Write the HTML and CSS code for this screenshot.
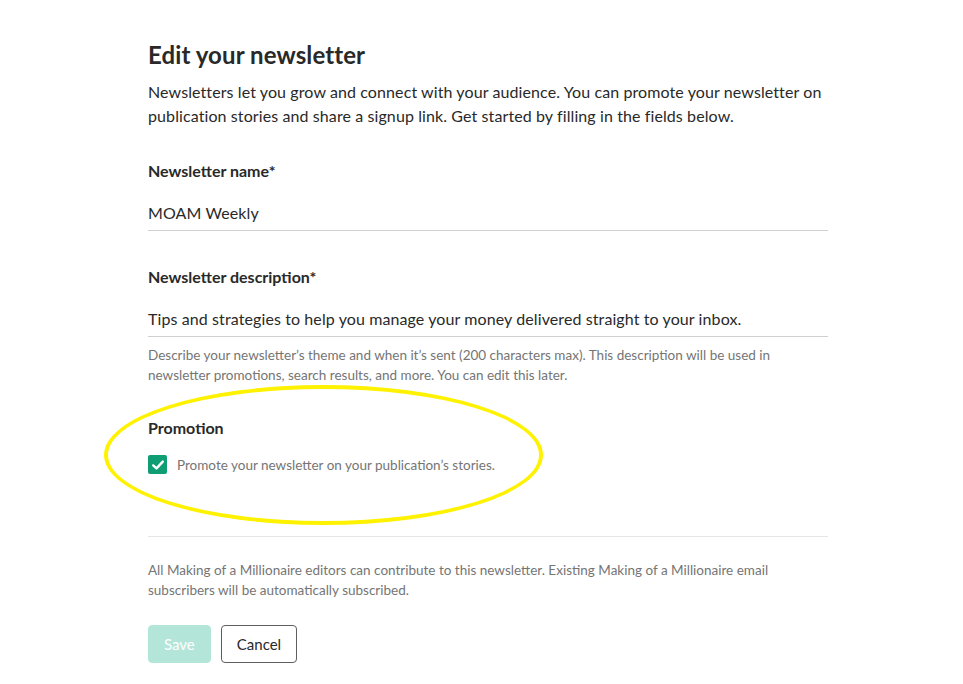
FILE: index.html
```html
<!DOCTYPE html>
<html lang="en">
<head>
  <meta charset="UTF-8">
  <title>Edit your newsletter</title>
  <link rel="stylesheet" href="styles.css">
</head>
<body>

<div class="page">
  <h1 class="title">Edit your newsletter</h1>
  <p class="intro">Newsletters let you grow and connect with your audience. You can promote your newsletter on publication stories and share a signup link. Get started by filling in the fields below.</p>

  <div class="field">
    <div class="label">Newsletter name*</div>
    <div class="input">MOAM Weekly</div>
  </div>

  <div class="field">
    <div class="label">Newsletter description*</div>
    <div class="input">Tips and strategies to help you manage your money delivered straight to your inbox.</div>
    <p class="help">Describe your newsletter’s theme and when it’s sent (200 characters max). This description will be used in newsletter promotions, search results, and more. You can edit this later.</p>
  </div>

  <div class="promo">
    <div class="label">Promotion</div>
    <label class="check-row">
      <span class="checkbox">
        <svg width="14" height="14" viewBox="0 0 14 14"><path d="M2.2 7.4 L5.5 10.4 L11.8 3.6" fill="none" stroke="#fff" stroke-width="2.4" stroke-linecap="round" stroke-linejoin="round"/></svg>
      </span>
      <span class="check-text">Promote your newsletter on your publication’s stories.</span>
    </label>
    <div class="highlight"></div>
  </div>

  <hr class="divider">

  <p class="note">All Making of a Millionaire editors can contribute to this newsletter. Existing Making of a Millionaire email subscribers will be automatically subscribed.</p>

  <div class="actions">
    <button class="btn btn-save">Save</button>
    <button class="btn btn-cancel">Cancel</button>
  </div>
</div>

</body>
</html>
```

FILE: styles.css
```css
/* Base */
body {
  margin: 0;
  background: #fff;
  font-family: 'Lato', sans-serif;
  color: #292929;
}

.page {
  width: 680px;
  margin-left: 148px;
  padding-top: 38px;
}

.title {
  margin: 0;
  font-size: 24px;
  font-weight: 700;
  line-height: 34px;
  letter-spacing: 0.1px;
}

.intro {
  margin: 8px 0 0;
  font-size: 16px;
  line-height: 24px;
  letter-spacing: 0.1px;
}

/* Fields */
.field {
  margin-top: 33px;
}

.field + .field {
  margin-top: 36px;
}

.label {
  font-size: 16px;
  font-weight: 700;
  line-height: 20px;
}

.input {
  margin-top: 20px;
  padding-bottom: 5px;
  font-size: 16px;
  line-height: 24px;
  letter-spacing: 0.1px;
  border-bottom: 1px solid #d0d0d0;
}

.help {
  margin: 8px 0 0;
  font-size: 13.5px;
  line-height: 20px;
  color: #757575;
}

/* Promotion */
.promo {
  position: relative;
  margin-top: 33px;
}

.check-row {
  display: flex;
  align-items: center;
  gap: 10px;
  margin-top: 17px;
}

.checkbox {
  width: 19px;
  height: 19px;
  border-radius: 2px;
  background: #0f9d74;
  display: flex;
  align-items: center;
  justify-content: center;
}

.check-text {
  font-size: 13.5px;
  color: #757575;
}

.highlight {
  position: absolute;
  left: -44px;
  top: -33px;
  width: 431px;
  height: 132px;
  border: 4px solid #fff200;
  border-radius: 50%;
  pointer-events: none;
}

.divider {
  margin: 62px 0 0;
  border: 0;
  border-top: 1px solid #e6e6e6;
}

.note {
  margin: 23px 0 0;
  font-size: 13.5px;
  line-height: 20px;
  color: #757575;
}

/* Buttons */
.actions {
  display: flex;
  gap: 10px;
  margin-top: 25px;
}

.btn {
  height: 38px;
  border-radius: 4px;
  font-family: inherit;
  font-size: 15px;
}

.btn-save {
  padding: 0 15px;
  background: #b3e6d8;
  color: #fff;
  border: 1px solid #b3e6d8;
}

.btn-cancel {
  padding: 0 15px;
  background: #fff;
  color: #292929;
  border: 1px solid #5e5e5e;
}
```
